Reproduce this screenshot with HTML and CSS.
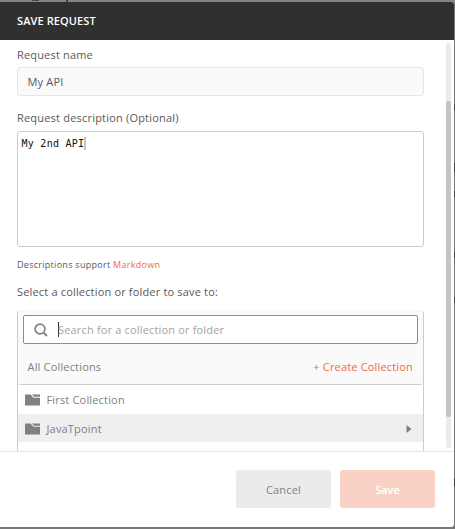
FILE: index.html
```html
<!DOCTYPE html>
<html lang="en">
<head>
<meta charset="utf-8">
<title>Save Request</title>
<link rel="stylesheet" href="styles.css">
</head>
<body>
<div class="page-marks"><i class="m1"></i><i class="m2"></i><i class="m3"></i><i class="m4"></i><i class="m5"></i><i class="m6"></i><i class="m7"></i><i class="m8"></i><i class="m9"></i></div>
<div class="modal">
  <header class="modal-header">SAVE REQUEST</header>
  <main class="modal-body">
    <div class="form">
      <div class="label label-name">Request name</div>
      <div class="input">My API</div>
      <div class="label label-desc">Request description (Optional)</div>
      <div class="textarea"><span>My 2nd API</span><i class="caret-light"></i></div>
      <div class="hint">Descriptions support <a>Markdown</a></div>
      <div class="label label-select">Select a collection or folder to save to:</div>
      <div class="picker">
        <div class="picker-head">
          <div class="search">
            <svg class="search-icon" width="14" height="14" viewBox="0 0 14 14"><circle cx="6" cy="6" r="4.9" fill="none" stroke="#808080" stroke-width="1.7"/><path d="M9.4 9.4L13 13" stroke="#808080" stroke-width="1.8"/></svg>
            <i class="caret"></i><span>Search for a collection or folder</span>
          </div>
          <div class="picker-bar"><span>All Collections</span><a>+ Create Collection</a></div>
        </div>
        <div class="row">
          <svg class="folder" width="15" height="12" viewBox="0 0 15 12"><path d="M0 0.5H5.5L8.5 3.8H15V11.5H0Z" fill="#808080"/><path d="M7 0.5H15V2.7H9Z" fill="#808080"/></svg>
          <span>First Collection</span>
        </div>
        <div class="row row-active">
          <svg class="folder" width="15" height="12" viewBox="0 0 15 12"><path d="M0 0.5H5.5L8.5 3.8H15V11.5H0Z" fill="#808080"/><path d="M7 0.5H15V2.7H9Z" fill="#808080"/></svg>
          <span>JavaTpoint</span>
          <svg class="arrow" width="6" height="8" viewBox="0 0 6 8"><path d="M0.5 0L5.5 4L0.5 8Z" fill="#808080"/></svg>
        </div>
      </div>
    </div>
    <div class="scrollbar"><div class="thumb"></div></div>
  </main>
  <footer class="modal-footer">
    <div class="btn">Cancel</div>
    <div class="btn btn-save">Save</div>
  </footer>
</div>
</body>
</html>
```
FILE: styles.css
```css
* { box-sizing: border-box; }
body {
  margin: 0;
  width: 455px;
  height: 529px;
  padding: 2px 1px 2px 0;
  overflow: hidden;
  position: relative;
  background: #777;
  font: 11px/16px "Open Sans", sans-serif;
  letter-spacing: 0.17px;
  color: #595959;
  white-space: nowrap;
}
a { color: #f26b3a; }

/* fragments of the dimmed page behind the dialog */
.page-marks i { position: absolute; background: #444; }
.page-marks .m1 { left: 32px; top: 0; width: 7px; height: 1px; }
.page-marks .m2 { left: 66px; top: 0; width: 2px; height: 2px; }
.page-marks .m3 { left: 0; top: 0; width: 455px; height: 2px; background: #858585; z-index: -1; }
.page-marks .m4 { left: 454px; top: 104px; width: 1px; height: 6px; }
.page-marks .m5 { left: 454px; top: 163px; width: 1px; height: 9px; }
.page-marks .m6 { left: 454px; top: 191px; width: 1px; height: 6px; }
.page-marks .m7 { left: 454px; top: 252px; width: 1px; height: 6px; }
.page-marks .m8 { left: 454px; top: 297px; width: 1px; height: 6px; }
.page-marks .m9 { left: 454px; top: 478px; width: 1px; height: 8px; }

.modal {
  display: flex;
  flex-direction: column;
  height: 525px;
  background: #fff;
  border-radius: 0 3px 3px 0;
  overflow: hidden;
}
.modal-header {
  height: 38px;
  padding: 11px 17px;
  background: #303030;
  color: #fff;
  font-weight: 600;
  letter-spacing: 0.1px;
}
.modal-body {
  display: flex;
  justify-content: space-between;
  height: 411px;
  padding: 0 3px 0 17px;
  overflow: hidden;
}
.form { width: 407px; }
.label { height: 16px; }
.label-name { margin-top: 7px; margin-bottom: 4px; }
.label-desc { margin-top: 14px; margin-bottom: 5px; letter-spacing: 0.2px; }
.label-select { margin-top: 11px; margin-bottom: 10px; }
.input {
  height: 29px;
  padding: 6px 9.5px;
  background: #fafafa;
  border: 1px solid #e6e6e6;
  border-radius: 3px;
}
.textarea {
  display: flex;
  height: 116px;
  padding: 5px 3.5px;
  border: 1px solid #ccc;
  border-radius: 3px;
  color: #111;
  font: 10px/14px "DejaVu Sans Mono", monospace;
  letter-spacing: 0.27px;
}
.caret-light { width: 2px; height: 13px; background: #c4c4c4; }
.hint { height: 16px; margin-top: 10px; font-size: 9px; letter-spacing: 0.28px; }
.picker {
  height: 160px;
  border: 1px solid #ccc;
  border-top-color: #f7f7f7;
  border-radius: 3px;
}
.picker-head {
  height: 74px;
  padding: 4px 5px 0;
  background: #fafafa;
  border-bottom: 1px solid #ccc;
  border-radius: 0 0 3px 3px;
}
.search {
  display: flex;
  align-items: center;
  height: 29px;
  padding-left: 10px;
  background: #fff;
  border: 1px solid #f26b3a;
  border-radius: 2px;
  color: #a3a3a3;
}
.search span { margin-left: -1px; }
.caret { width: 1px; height: 15px; margin-left: 10px; background: #333; }
.picker-bar {
  display: flex;
  justify-content: space-between;
  padding: 15px 5px 0 4.5px;
  color: #808080;
}
.row {
  display: flex;
  align-items: center;
  height: 29px;
  padding: 0 11px 0 7px;
  color: #808080;
}
.row-active { height: 28px; padding-top: 2px; background: #efefef; }
.folder { margin-right: 6.5px; }
.arrow { margin-left: auto; }
.scrollbar {
  width: 5px;
  height: 405px;
  margin-top: 3px;
  padding-top: 58px;
  background: #ebebeb;
  border-radius: 2px;
}
.thumb { height: 316px; background: #c4c4c4; border-radius: 2px; }
.modal-footer {
  display: flex;
  justify-content: flex-end;
  gap: 9px;
  height: 76px;
  padding: 18px 19px 0 0;
  border-top: 1px solid #e6e6e6;
}
.btn {
  width: 95px;
  height: 38px;
  padding-top: 12px;
  background: #ebebeb;
  border-radius: 3px;
  color: #808080;
  text-align: center;
}
.btn-save { background: #fad2c5; color: #fff; font-weight: 600; letter-spacing: 0; }
```
